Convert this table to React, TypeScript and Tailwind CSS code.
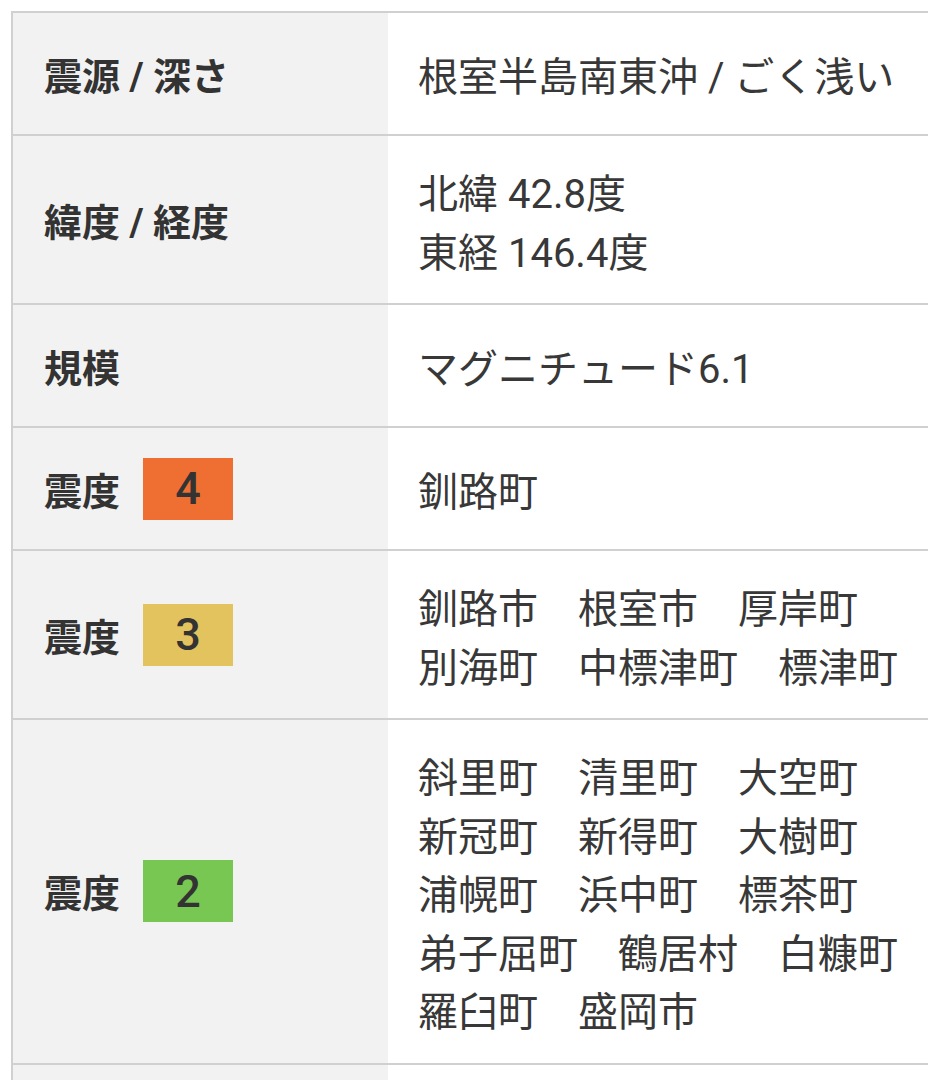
import type { ReactElement, ReactNode } from 'react';

const font = 'font-["Roboto","Noto_Sans_CJK_JP",sans-serif]';

type Row = {
  label: string;
  badge?: { text: string; color: string };
  value: ReactNode;
};

const Places = ({ items }: { items: string[] }): ReactElement => (
  <div className="flex flex-wrap gap-x-[40px]">
    {items.map((item) => (
      <span key={item} className="whitespace-nowrap">
        {item}
      </span>
    ))}
  </div>
);

const rows: Row[] = [
  { label: '震源 / 深さ', value: '根室半島南東沖 / ごく浅い' },
  {
    label: '緯度 / 経度',
    value: (
      <>
        <div>北緯 42.8度</div>
        <div>東経 146.4度</div>
      </>
    ),
  },
  { label: '規模', value: 'マグニチュード6.1' },
  { label: '震度', badge: { text: '4', color: 'bg-[#ef6f32]' }, value: '釧路町' },
  {
    label: '震度',
    badge: { text: '3', color: 'bg-[#e3c35e]' },
    value: <Places items={['釧路市', '根室市', '厚岸町', '別海町', '中標津町', '標津町']} />,
  },
  {
    label: '震度',
    badge: { text: '2', color: 'bg-[#78c752]' },
    value: (
      <Places
        items={[
          '斜里町',
          '清里町',
          '大空町',
          '新冠町',
          '新得町',
          '大樹町',
          '浦幌町',
          '浜中町',
          '標茶町',
          '弟子屈町',
          '鶴居村',
          '白糠町',
          '羅臼町',
          '盛岡市',
        ]}
      />
    ),
  },
];

export default function App(): ReactElement {
  return (
    <div className={`w-full h-[1080px] overflow-hidden bg-white pt-[11px] pl-[11px] ${font}`}>
      <div className="w-[970px] border-t-2 border-l-2 border-[#d0d0d0]">
        {rows.map((row, index) => (
          <div key={index} className="flex min-h-[123px] border-b-2 border-[#d0d0d0]">
            <div className="flex w-[375px] shrink-0 items-center gap-[23px] bg-[#f2f2f2] pl-[31px]">
              <span className="pt-[6px] text-[38px] font-bold leading-none text-[#333]">{row.label}</span>
              {row.badge && (
                <span
                  className={`flex h-[62px] w-[90px] items-center justify-center text-[45px] font-medium leading-none text-[#333] ${row.badge.color}`}
                >
                  {row.badge.text}
                </span>
              )}
            </div>
            <div className="flex flex-1 flex-col justify-center pt-[30px] pb-[20px] pl-[30px] pr-[30px] text-[40px] leading-[58.5px] text-[#383838]">
              {row.value}
            </div>
          </div>
        ))}
        <div className="flex h-[60px]">
          <div className="w-[375px] bg-[#f2f2f2]" />
        </div>
      </div>
    </div>
  );
}
